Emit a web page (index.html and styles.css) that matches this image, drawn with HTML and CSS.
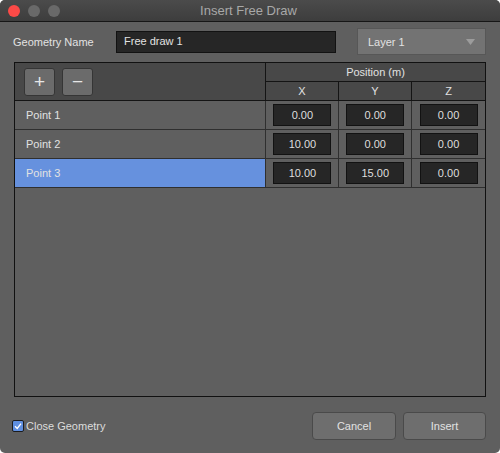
FILE: index.html
```html
<!DOCTYPE html>
<html>
<head>
<meta charset="utf-8">
<link rel="stylesheet" href="styles.css">
</head>
<body>
<div class="window">
  <div class="titlebar">
    <div class="lights">
      <span class="light red"></span>
      <span class="light"></span>
      <span class="light"></span>
    </div>
    <div class="title">Insert Free Draw</div>
  </div>
  <div class="content">
    <div class="name-row">
      <label class="name-label">Geometry Name</label>
      <div class="text-field">Free draw 1</div>
      <div class="dropdown">
        <span>Layer 1</span>
        <svg class="caret" width="9" height="6" viewBox="0 0 9 6"><polygon points="0,0 9,0 4.5,6" fill="#9c9c9c"/></svg>
      </div>
    </div>
    <div class="table">
      <div class="thead">
        <div class="tools">
          <button class="tool-btn">+</button>
          <button class="tool-btn">&minus;</button>
        </div>
        <div class="pos-head">
          <div class="pos-title">Position (m)</div>
          <div class="axes">
            <div class="axis">X</div>
            <div class="axis">Y</div>
            <div class="axis">Z</div>
          </div>
        </div>
      </div>
      <div class="row">
        <div class="name-cell">Point 1</div>
        <div class="val-cell"><div class="val">0.00</div></div>
        <div class="val-cell"><div class="val">0.00</div></div>
        <div class="val-cell"><div class="val">0.00</div></div>
      </div>
      <div class="row">
        <div class="name-cell">Point 2</div>
        <div class="val-cell"><div class="val">10.00</div></div>
        <div class="val-cell"><div class="val">0.00</div></div>
        <div class="val-cell"><div class="val">0.00</div></div>
      </div>
      <div class="row">
        <div class="name-cell selected">Point 3</div>
        <div class="val-cell"><div class="val">10.00</div></div>
        <div class="val-cell"><div class="val">15.00</div></div>
        <div class="val-cell"><div class="val">0.00</div></div>
      </div>
    </div>
    <div class="footer">
      <label class="check">
        <span class="box"><svg width="10" height="10" viewBox="0 0 10 10"><path d="M2 5.2 L4.2 7.4 L8 2.6" fill="none" stroke="#fff" stroke-width="1.4"/></svg></span>
        <span>Close Geometry</span>
      </label>
      <div class="buttons">
        <button class="btn cancel">Cancel</button>
        <button class="btn insert">Insert</button>
      </div>
    </div>
  </div>
</div>
</body>
</html>
```

FILE: styles.css
```css
* { box-sizing: border-box; }
html, body { margin: 0; padding: 0; background: #ffffff; }
body {
  font-family: "Liberation Sans", Arial, sans-serif;
  font-size: 11px;
  color: #e2e2e2;
}
.window {
  width: 500px;
  height: 453px;
  background: #5f5f5f;
  border-radius: 5px;
  overflow: hidden;
  display: flex;
  flex-direction: column;
}
.titlebar {
  height: 22px;
  flex: none;
  background: linear-gradient(#4b4b4b, #3d3d3d);
  border-bottom: 1px solid #161616;
  position: relative;
  display: flex;
  align-items: center;
  justify-content: center;
}
.lights {
  position: absolute;
  left: 8px;
  top: 5px;
  display: flex;
  gap: 8px;
}
.light {
  width: 12px;
  height: 12px;
  border-radius: 50%;
  background: #696969;
}
.light.red { background: #fc4a47; }
.title {
  font-size: 13px;
  color: #a8a8a8;
  margin-left: -3px;
  margin-top: -1px;
}
.content {
  flex: 1;
  display: flex;
  flex-direction: column;
  padding: 6px 14px 0 14px;
}
.name-row {
  height: 27px;
  display: flex;
  align-items: center;
}
.name-label {
  width: 102px;
  margin-left: -1px;
}
.text-field {
  width: 220px;
  height: 22px;
  background: #262626;
  border: 1px solid #121212;
  padding-left: 7px;
  line-height: 19px;
  margin-left: 1px;
}
.dropdown {
  width: 129px;
  height: 27px;
  margin-left: 21px;
  background: #737373;
  border: 1px solid #575757;
  display: flex;
  align-items: center;
  justify-content: space-between;
  padding: 0 10px;
}
.caret { margin-top: 1px; }
.table {
  margin-top: 7px;
  width: 472px;
  height: 335px;
  border: 1px solid #111111;
  background: #5f5f5f;
}
.thead {
  display: flex;
  height: 38px;
  border-bottom: 1px solid #141414;
  background: #484848;
}
.tools {
  width: 252px;
  border-right: 1px solid #141414;
  display: flex;
  align-items: center;
  gap: 7px;
  padding-left: 9px;
}
.tool-btn {
  width: 31px;
  height: 28px;
  background: #6b6b6b;
  border: 1px solid #353535;
  border-radius: 3px;
  color: #e6e6e6;
  font-family: "Liberation Sans", Arial, sans-serif;
  font-size: 19px;
  line-height: 22px;
  padding: 0;
  margin-top: 1px;
}
.pos-head {
  flex: 1;
  display: flex;
  flex-direction: column;
}
.pos-title {
  height: 19px;
  border-bottom: 1px solid #141414;
  text-align: center;
  line-height: 19px;
}
.axes {
  flex: 1;
  display: flex;
}
.axis {
  width: 73px;
  border-right: 1px solid #141414;
  text-align: center;
  line-height: 19px;
  font-size: 11px;
}
.axis:last-child { border-right: none; }
.row {
  display: flex;
  height: 29px;
  border-bottom: 1px solid #2f2f2f;
}
.name-cell {
  width: 252px;
  border-right: 1px solid #2f2f2f;
  padding-left: 11px;
  display: flex;
  align-items: center;
}
.name-cell.selected { background: #6691de; }
.val-cell {
  width: 73px;
  border-right: 1px solid #2f2f2f;
  display: flex;
  align-items: center;
  justify-content: center;
}
.val-cell:last-child { border-right: none; }
.val {
  width: 58px;
  height: 22px;
  background: #262626;
  border: 1px solid #121212;
  text-align: center;
  line-height: 20px;
  font-size: 11px;
  color: #dedede;
}
.footer {
  margin-top: 15px;
  display: flex;
  align-items: center;
  justify-content: space-between;
}
.check {
  display: flex;
  align-items: center;
  gap: 2px;
  margin-left: -2px;
  color: #dcdcdc;
}
.box {
  width: 12px;
  height: 12px;
  background: #5f8fe0;
  border: 1px solid #1c1c1c;
  border-radius: 2px;
  display: flex;
  align-items: center;
  justify-content: center;
}
.buttons {
  display: flex;
  gap: 7px;
}
.btn {
  height: 28px;
  background: #6e6e6e;
  border: 1px solid #4a4a4a;
  border-radius: 4px;
  color: #e2e2e2;
  font-family: "Liberation Sans", Arial, sans-serif;
  font-size: 11px;
  padding: 0;
}
.cancel { width: 84px; }
.insert { width: 83px; }
```
